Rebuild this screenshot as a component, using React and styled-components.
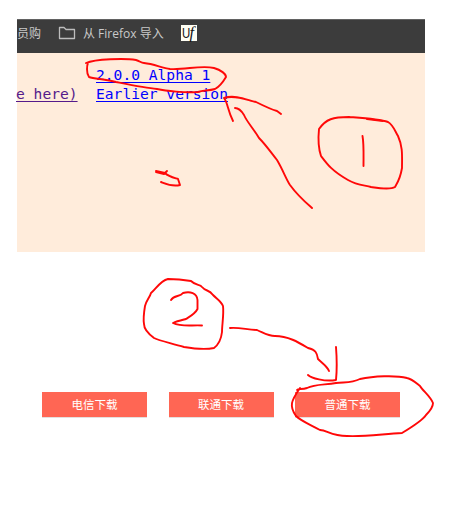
import React from "react";
import styled, { createGlobalStyle } from "styled-components";

const GlobalStyle = createGlobalStyle`
  * { box-sizing: border-box; }
  body { margin: 0; background: #fff; }
`;

const Page = styled.main`
  position: relative;
  width: 450px;
  height: 520px;
  padding: 19px 25px 0 17px;
  overflow: hidden;
  background: #fff;
`;

const BrowserPanel = styled.section`
  height: 233px;
  background: #ffecdb;
`;

const BookmarkBar = styled.nav`
  display: flex;
  align-items: center;
  height: 34px;
  padding-bottom: 6px;
  border-top: 1px solid #626262;
  background: #3c3c3c;
  color: #c9c9c9;
  font: 12px/18px "Open Sans", "Noto Sans CJK SC", sans-serif;
  white-space: nowrap;
`;

const Bookmark = styled.span`
  flex: none;
  width: ${(p) => p.$width}px;
`;

const FolderIcon = styled.svg`
  flex: none;
  width: 18px;
  height: 16px;
  margin: -1px 7px 0 0;
`;

const SiteIcon = styled.span`
  flex: none;
  display: flex;
  justify-content: center;
  width: 16px;
  height: 16px;
  margin-top: -2px;
  background: #fffff4;
  color: #111;
  font: 15px/16px "Liberation Sans", sans-serif;
`;

const Letter = styled.span`
  width: 8px;
  transform: scaleX(0.76);
  transform-origin: left;
`;

const ItalicLetter = styled.span`
  width: 7px;
  font: italic 16px/15px "Liberation Serif", serif;
`;

const Listing = styled.div`
  display: grid;
  grid-template-columns: 79px auto;
  grid-auto-rows: 19px;
  padding-top: 12px;
  font: 14.62px/19px "DejaVu Sans Mono", monospace;
  white-space: pre;
`;

const Link = styled.a`
  justify-self: start;
  margin-left: ${(p) => p.$shift || 0}px;
  color: ${(p) => (p.$visited ? "#551a8b" : "#0000ff")};
  text-decoration: underline;
  text-decoration-thickness: 1px;
  text-underline-offset: 2px;
  text-decoration-skip-ink: none;
`;

const Downloads = styled.div`
  display: grid;
  grid-template-columns: repeat(3, 105px);
  column-gap: 21.5px;
  margin: 140px 0 0 25px;
`;

const DownloadButton = styled.button`
  height: 25px;
  padding: 0 0 1px;
  border: 0;
  background: #ff6654;
  box-shadow: 0 1px 0 #e4dfde;
  color: #fff;
  font: 11.5px/24px "Noto Sans CJK SC", sans-serif;
  text-align: center;
`;

const Ink = styled.svg`
  position: absolute;
  inset: 0;
  width: 450px;
  height: 520px;
  fill: none;
  stroke: #ff0808;
  stroke-width: 1.9;
  stroke-linecap: round;
  stroke-linejoin: round;
  pointer-events: none;
`;

const strokes = [
  "M86 63C95 59 125 58 136 60C140 61 141 63 144 63C154 64 162 68 170 69C185 70 201 65 214 68C221 70 226 74 226 77C223 82 219 87 215 89C208 91 203 90 198 92C185 93 166 91 157 89C145 88 126 84 116 82C105 79 94 79 89 77C86 73 87 65 88 63",
  "M312 208C304 201 298 196 290 185C286 179 283 170 277 160C270 151 265 144 259 138C253 128 247 122 244 115C241 110 238 108 235 108",
  "M233 121C227 109 228 103 224 98C236 94 249 101 256 102C264 106 270 109 277 111L281 114",
  "M156 172L164 174L167 171M156 171L165 173C169 177 175 178 178 179L180 185C172 187 166 184 161 182",
  "M319 129C326 119 333 117 349 117C362 118 379 119 388 122C393 125 394 129 398 136C403 147 402 156 402 168C400 180 396 185 395 187C390 190 378 188 371 187C366 185 358 186 348 180C332 171 327 164 321 156C318 147 318 139 319 129",
  "M367 119L383 121",
  "M362.5 136C364 144 363.5 155 363.5 166",
  "M145 306C146 301 150 297 151 293C156 289 160 281 168 279C176 279 185 280 191 281C196 286 200 284 202 287C206 292 209 289 213 295C217 299 221 301 223 306C224 314 222 325 222 332C221 341 218 345 214 348C204 350 190 348 184 347C171 343 160 341 154 338C146 332 144 328 144 324C143 318 144 312 145 306",
  "M171 300C174 295 180 297 183 293C190 291 197 293 197.5 300V309C195 314 189 317 186 319C182 320 177 321 173 323C181 327 190 325 202 325.5",
  "M230 328C239 327 248 330 257 330C264 333 268 336 275 336C288 336 298 342 308 348C316 350 317 353 318 359C323 364 327 366 329 371",
  "M336 347C337 360 337 370 336 380C325 382 311 378 308 375",
  "M300 388C291 401 289 406 296 416C301 421 309 424 320 430C327 430 331 436 347 436C363 437 383 434 402 433C412 427 422 421 426 415C430 411 433 407 433 403C430 396 423 391 420 386C415 382 412 379 407 378C396 375 373 376 360 379C352 383 346 382 336 383C325 385 315 384 307 388C302 390 298 388 297 390",
];

const buttons = ["电信下载", "联通下载", "普通下载"];

export default function App() {
  return (
    <>
      <GlobalStyle />
      <Page>
        <BrowserPanel>
          <BookmarkBar>
            <Bookmark $width={41}>员购</Bookmark>
            <FolderIcon viewBox="0 0 18 16" fill="none" stroke="#bdbdbd" strokeWidth="1.3" strokeLinejoin="round">
              <path d="M1.5 2.5H6L8 4.5H16.5V13.5H1.5Z" />
            </FolderIcon>
            <Bookmark $width={98}>从 Firefox 导入</Bookmark>
            <SiteIcon>
              <Letter>U</Letter>
              <ItalicLetter>f</ItalicLetter>
            </SiteIcon>
          </BookmarkBar>
          <Listing>
            <span />
            <Link>2.0.0 Alpha 1</Link>
            <Link $visited $shift={-1}>e here)</Link>
            <Link>Earlier version</Link>
          </Listing>
        </BrowserPanel>
        <Downloads>
          {buttons.map((label) => (
            <DownloadButton key={label}>{label}</DownloadButton>
          ))}
        </Downloads>
        <Ink viewBox="0 0 450 520">
          {strokes.map((d) => (
            <path key={d} d={d} />
          ))}
        </Ink>
      </Page>
    </>
  );
}
